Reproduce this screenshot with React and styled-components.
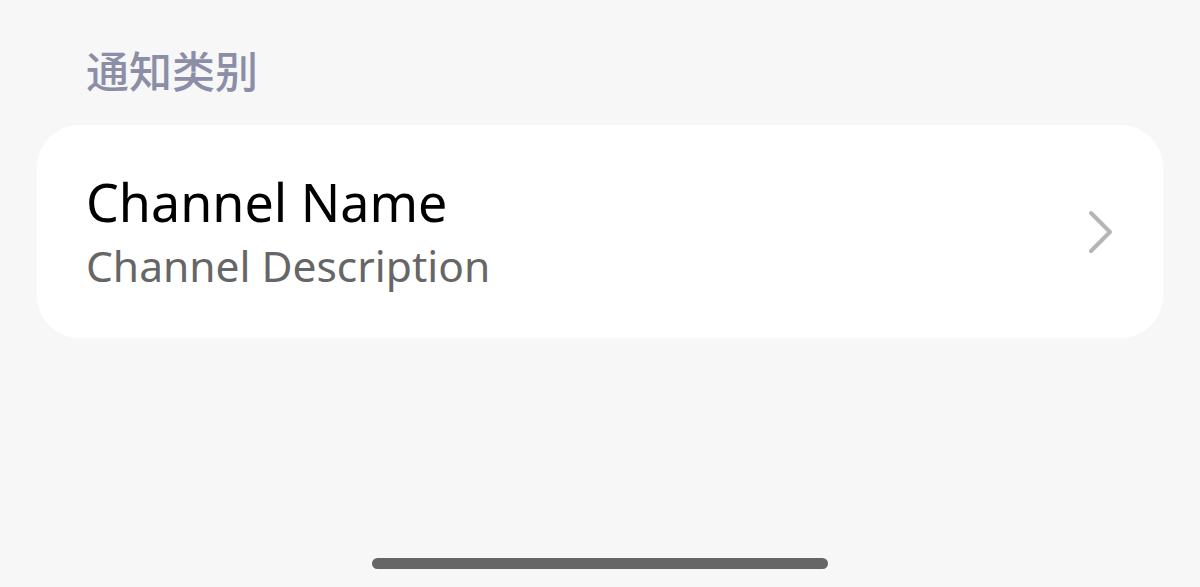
import { createGlobalStyle, styled } from "styled-components";

const GlobalStyle = createGlobalStyle`
  html, body { margin: 0; padding: 0; background: #f7f7f7; }
  body { font-family: "Noto Sans", "Noto Sans CJK SC", sans-serif; }
`;

const Page = styled.div`
  height: 587px;
  box-sizing: border-box;
  display: flex;
  flex-direction: column;
  padding: 0 37px;
  background: #f7f7f7;
`;

const SectionTitle = styled.div`
  font-family: "Noto Sans CJK SC", sans-serif;
  font-size: 43px;
  font-weight: 500;
  line-height: 56px;
  color: #8b8ea6;
  padding: 41px 0 0 49px;
  height: 81px;
  box-sizing: border-box;
`;

const Card = styled.div`
  margin-top: 44px;
  height: 213px;
  background: #fff;
  border-radius: 42px;
  display: flex;
  align-items: center;
  padding: 0 48px 0 49px;
`;

const Texts = styled.div`
  flex: 1;
  display: flex;
  flex-direction: column;
  margin-top: 4px;
`;

const Name = styled.div`
  font-size: 52px;
  line-height: 62px;
  color: #000;
`;

const Desc = styled.div`
  font-size: 42.5px;
  line-height: 60px;
  margin-top: 3px;
  color: #666;
`;

const Spacer = styled.div`
  flex: 1;
`;

const HomeBar = styled.div`
  align-self: center;
  width: 456px;
  height: 11px;
  border-radius: 6px;
  background: #666;
  margin-bottom: 18px;
`;

const Chevron = () => (
  <svg width="28" height="44" viewBox="0 0 28 44" fill="none">
    <path d="M4 3 L23 22 L4 41" stroke="#b5b5b5" strokeWidth="4" strokeLinecap="round" strokeLinejoin="round" />
  </svg>
);

export default function App() {
  return (
    <Page>
      <GlobalStyle />
      <SectionTitle>通知类别</SectionTitle>
      <Card>
        <Texts>
          <Name>Channel Name</Name>
          <Desc>Channel Description</Desc>
        </Texts>
        <Chevron />
      </Card>
      <Spacer />
      <HomeBar />
    </Page>
  );
}
